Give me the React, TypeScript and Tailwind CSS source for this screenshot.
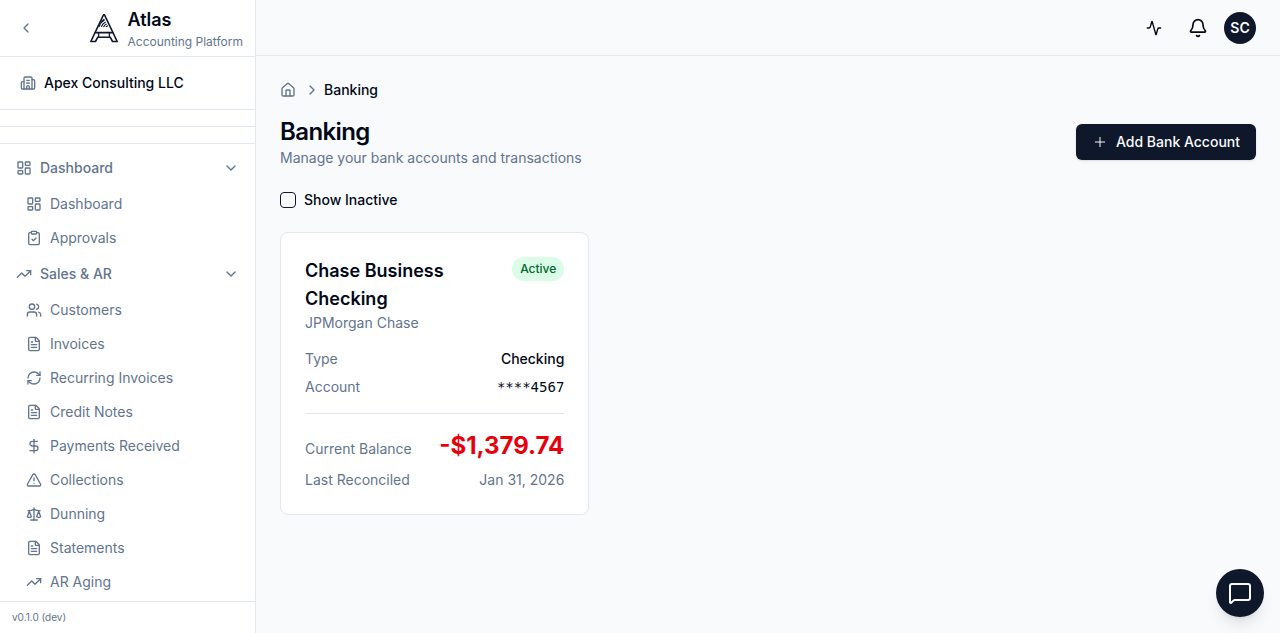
import React from "react";
import {
  Activity,
  Bell,
  Building2,
  ChevronDown,
  ChevronLeft,
  ChevronRight,
  ClipboardCheck,
  DollarSign,
  FileText,
  House,
  LayoutDashboard,
  MessageSquare,
  Plus,
  RefreshCw,
  Scale,
  TrendingUp,
  TriangleAlert,
  Users,
} from "lucide-react";

const navGroups = [
  {
    label: "Dashboard",
    icon: LayoutDashboard,
    items: [
      { label: "Dashboard", icon: LayoutDashboard },
      { label: "Approvals", icon: ClipboardCheck },
    ],
  },
  {
    label: "Sales & AR",
    icon: TrendingUp,
    items: [
      { label: "Customers", icon: Users },
      { label: "Invoices", icon: FileText },
      { label: "Recurring Invoices", icon: RefreshCw },
      { label: "Credit Notes", icon: FileText },
      { label: "Payments Received", icon: DollarSign },
      { label: "Collections", icon: TriangleAlert },
      { label: "Dunning", icon: Scale },
      { label: "Statements", icon: FileText },
      { label: "AR Aging", icon: TrendingUp },
    ],
  },
];

function AtlasLogo() {
  return (
    <svg
      className="size-8 flex-none text-slate-900"
      viewBox="0 0 32 32"
      fill="none"
      stroke="currentColor"
      strokeWidth="1.6"
      strokeLinejoin="round"
      strokeLinecap="round"
      aria-hidden="true"
    >
      {/* Outer A with its two feet */}
      <path d="M15.5 2.8h1L29.2 29.5h-4.7l-2.3-4.3H9.8l-2.3 4.3H2.8Z" />
      {/* Crossbars and inner legs */}
      <path d="M7.4 20.6h17.2" />
      <path d="M10.6 20.6v4.6M21.4 20.6v4.6" strokeWidth="1.3" />
      {/* Hatched peak */}
      <path
        d="M11.4 14.4c.5-2.5 2.2-4.7 4.8-6.2M13.6 14.4c.4-1.7 1.7-3.1 3.7-4.1M15.8 14.6c.3-1 1.2-1.8 2.4-2.3M18.2 14.6l1.2-.7M13.6 9.4l2.4-2"
        strokeWidth="1.2"
      />
    </svg>
  );
}

function Sidebar() {
  return (
    <aside className="flex w-64 flex-none flex-col border-r border-slate-200 bg-white">
      <div className="flex h-[57px] flex-none items-center justify-between border-b border-slate-200 px-3">
        <button
          type="button"
          aria-label="Collapse sidebar"
          className="flex size-7 items-center justify-center rounded-md text-slate-500"
        >
          <ChevronLeft className="size-4" />
        </button>
        <a href="#" className="flex items-center gap-2">
          <AtlasLogo />
          <span className="flex flex-col">
            <span className="text-lg leading-7 font-semibold">Atlas</span>
            <span className="text-xs text-slate-500">Accounting Platform</span>
          </span>
        </a>
      </div>
      {/* Company */}
      <div className="flex-none border-b border-slate-200 px-3 py-2">
        <button
          type="button"
          className="flex h-9 w-full items-center gap-2 px-2 text-sm font-medium"
        >
          <Building2 className="size-4 text-slate-500" />
          Apex Consulting LLC
        </button>
      </div>
      <div className="flex-none border-b border-slate-200 p-2" />
      <div className="flex-none border-b border-slate-200 p-2" />
      {/* Navigation */}
      <nav className="flex min-h-0 flex-1 flex-col gap-1 overflow-hidden p-2 text-sm text-slate-500">
        {navGroups.map((group) => (
          <div key={group.label} className="flex flex-col gap-1">
            <button
              type="button"
              className="flex h-8 w-full flex-none items-center gap-2 px-2 font-medium"
            >
              <group.icon className="size-4" />
              {group.label}
              <ChevronDown className="ml-auto size-4" />
            </button>
            <ul className="flex flex-col gap-0.5 px-2">
              {group.items.map((item) => (
                <li key={item.label}>
                  <a href="#" className="flex h-8 items-center gap-2 px-2.5">
                    <item.icon className="size-4" />
                    {item.label}
                  </a>
                </li>
              ))}
            </ul>
          </div>
        ))}
      </nav>
      <div className="flex-none border-t border-slate-200 px-3 py-2 text-[10px] leading-[15px] text-slate-500">
        v0.1.0 (dev)
      </div>
    </aside>
  );
}

function Topbar() {
  return (
    <header className="flex h-14 flex-none items-center justify-end gap-2 border-b border-gray-200 px-6">
      <button type="button" aria-label="Activity" className="flex size-9 items-center justify-center">
        <Activity className="size-4" />
      </button>
      <button type="button" aria-label="Notifications" className="flex size-9 items-center justify-center">
        <Bell className="size-5" />
      </button>
      <button
        type="button"
        className="flex size-8 items-center justify-center rounded-full bg-slate-900 text-sm font-semibold text-slate-50"
      >
        SC
      </button>
    </header>
  );
}

function AccountCard() {
  return (
    <article className="rounded-lg border border-slate-200 bg-white p-6 text-sm">
      <div className="flex items-start justify-between">
        <div>
          <h2 className="text-lg leading-7 font-semibold">Chase Business Checking</h2>
          <p className="text-slate-500">JPMorgan Chase</p>
        </div>
        <span className="rounded-full bg-green-100 px-2 py-1 text-xs font-medium text-green-800">
          Active
        </span>
      </div>
      <dl className="mt-4 flex flex-col gap-2">
        <div className="flex justify-between">
          <dt className="text-slate-500">Type</dt>
          <dd className="font-medium">Checking</dd>
        </div>
        <div className="flex justify-between">
          <dt className="text-slate-500">Account</dt>
          <dd className="font-['DejaVu_Sans_Mono',monospace]">****4567</dd>
        </div>
      </dl>
      <dl className="mt-4 flex flex-col gap-2 border-t border-slate-200 pt-4">
        <div className="flex items-baseline justify-between">
          <dt className="text-slate-500">Current Balance</dt>
          <dd className="text-2xl font-bold text-red-600">-$1,379.74</dd>
        </div>
        <div className="flex justify-between text-slate-500">
          <dt>Last Reconciled</dt>
          <dd>Jan 31, 2026</dd>
        </div>
      </dl>
    </article>
  );
}

export default function App() {
  return (
    <div className="flex h-screen bg-slate-50 font-['Inter',sans-serif] text-[#020817]">
      <Sidebar />
      <div className="flex min-w-0 flex-1 flex-col">
        <Topbar />
        <main className="flex-1 overflow-auto p-6">
          {/* Breadcrumb */}
          <nav aria-label="Breadcrumb" className="flex items-center gap-1 text-sm">
            <a href="#" aria-label="Home" className="mr-1 text-slate-500">
              <House className="size-4" />
            </a>
            <ChevronRight className="size-4 text-slate-500" />
            <span className="font-medium">Banking</span>
          </nav>
          <div className="mt-4 flex items-center justify-between">
            <div>
              <h1 className="text-2xl font-semibold tracking-tight">Banking</h1>
              <p className="text-sm text-slate-500">Manage your bank accounts and transactions</p>
            </div>
            <button
              type="button"
              className="flex h-9 items-center gap-2 rounded-md bg-slate-900 px-4 text-sm font-medium text-slate-50 shadow-sm"
            >
              <Plus className="size-4" strokeWidth={1.5} />
              Add Bank Account
            </button>
          </div>
          {/* Filters */}
          <div className="mt-6 flex h-4 items-center gap-2">
            <input
              id="show-inactive"
              type="checkbox"
              className="size-4 appearance-none rounded-sm border border-slate-900 checked:bg-slate-900"
            />
            <label htmlFor="show-inactive" className="text-sm font-medium">
              Show Inactive
            </label>
          </div>
          <div className="mt-6 grid gap-6 md:grid-cols-2 lg:grid-cols-3">
            <AccountCard />
          </div>
        </main>
      </div>
      <button
        type="button"
        aria-label="Open chat"
        className="fixed right-4 bottom-4 flex size-12 items-center justify-center rounded-full bg-slate-900 text-slate-50 shadow-lg"
      >
        <MessageSquare className="size-6" />
      </button>
    </div>
  );
}
